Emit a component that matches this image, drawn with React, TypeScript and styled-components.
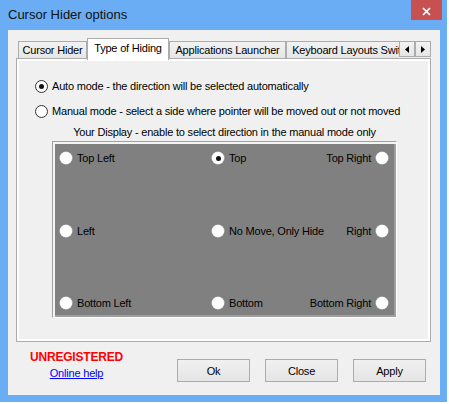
import React from "react";
import styled, { createGlobalStyle, css } from "styled-components";

const GlobalStyle = createGlobalStyle`
  html, body { margin: 0; padding: 0; background: #ffffff; }
  body {
    font-family: "Liberation Sans", Arial, sans-serif;
    font-size: 11px;
    letter-spacing: -0.2px;
    color: #000;
  }
  * { box-sizing: border-box; }
`;

const Window = styled.div`
  width: 447px;
  height: 402px;
  background: #6aadf4;
  display: flex;
  flex-direction: column;
`;

const TitleBar = styled.div`
  height: 30px;
  flex-shrink: 0;
  display: flex;
  align-items: flex-start;
  justify-content: space-between;
`;

const Title = styled.div`
  font-family: "Liberation Sans", Arial, sans-serif;
  font-size: 13px;
  letter-spacing: 0;
  line-height: 30px;
  padding-left: 8px;
  color: #111;
`;

const CloseButton = styled.div`
  width: 31px;
  height: 20px;
  margin-right: 5px;
  background: #c75050;
  display: flex;
  align-items: center;
  justify-content: center;
  padding-top: 2px;
`;

const Client = styled.div`
  flex: 1;
  margin: 0 7px 7px 8px;
  background: #f0f0f0;
  display: flex;
  flex-direction: column;
`;

const TabStrip = styled.div`
  height: 22px;
  margin: 8px 9px -2px 8px;
  padding-left: 2px;
  display: flex;
  position: relative;
  z-index: 1;
`;

const TabsViewport = styled.div`
  flex: 1;
  display: flex;
  align-items: flex-start;
  overflow: hidden;
  height: 22px;
`;

const Tab = styled.div<{ $active?: boolean; $w: number }>`
  flex: 0 0 auto;
  width: ${(p) => p.$w}px;
  white-space: nowrap;
  overflow: hidden;
  text-align: center;
  line-height: 13px;
  border: 1px solid #acacac;
  border-bottom: none;
  ${(p) =>
    p.$active
      ? css`
          height: 22px;
          padding-top: 3px;
          background: #ffffff;
          position: relative;
          z-index: 1;
        `
      : css`
          height: 17px;
          margin-top: 3px;
          padding-top: 2px;
          background: linear-gradient(#f2f2f2, #e6e6e6);
        `}
`;

const ArrowGroup = styled.div`
  display: flex;
  margin-top: 3px;
`;

const ArrowButton = styled.div`
  width: 16px;
  height: 16px;
  border: 1px solid #acacac;
  background: linear-gradient(#f2f2f2, #e6e6e6);
  display: flex;
  align-items: center;
  justify-content: center;
`;

const Panel = styled.div`
  height: 284px;
  margin: 0 9px 0 8px;
  border: 1px solid #acacac;
  box-shadow: inset 0 0 0 2px #ffffff;
  padding: 20px 0 0 18px;
  display: flex;
  flex-direction: column;
`;

const RadioRow = styled.label<{ $gapTop?: number }>`
  display: flex;
  align-items: center;
  gap: 4px;
  height: 14px;
  white-space: nowrap;
  margin-top: ${(p) => p.$gapTop ?? 0}px;
`;

const Radio = styled.span<{ $checked?: boolean }>`
  width: 13px;
  height: 13px;
  border-radius: 50%;
  border: 1px solid #333333;
  background: #ffffff;
  display: flex;
  align-items: center;
  justify-content: center;
  flex-shrink: 0;
  &::after {
    content: "";
    width: 5px;
    height: 5px;
    border-radius: 50%;
    background: ${(p) => (p.$checked ? "#111" : "transparent")};
  }
`;

const DisplaySection = styled.div`
  width: 345px;
  margin: 7px 0 0 17px;
  display: flex;
  flex-direction: column;
`;

const Caption = styled.div`
  height: 14px;
  line-height: 14px;
  text-align: center;
  white-space: nowrap;
`;

const DisplayBox = styled.div`
  height: 177px;
  margin-top: 2px;
  border: 1px solid;
  border-color: #a0a0a0 #ffffff #ffffff #a0a0a0;
  box-shadow: inset 2px 2px 0 #f4f4f4, inset -2px -2px 0 #a0a0a0;
  background: #808080;
  padding: 9px 8px 7px 7px;
  display: grid;
  grid-template-columns: 152px minmax(0, 1fr) auto;
  grid-template-rows: repeat(3, 14px);
  align-content: space-between;
`;

const Spot = styled.label<{ $end?: boolean }>`
  display: flex;
  align-items: center;
  gap: 5px;
  height: 14px;
  white-space: nowrap;
  justify-self: ${(p) => (p.$end ? "end" : "start")};
`;

const SpotRadio = styled.span<{ $checked?: boolean }>`
  width: 12px;
  height: 12px;
  border-radius: 50%;
  background: #ffffff;
  box-shadow: 0 0 0 0.5px #d8d8d8;
  display: flex;
  align-items: center;
  justify-content: center;
  flex-shrink: 0;
  &::after {
    content: "";
    width: 5px;
    height: 5px;
    border-radius: 50%;
    background: ${(p) => (p.$checked ? "#111" : "transparent")};
  }
`;

const BottomBar = styled.div`
  display: flex;
  align-items: flex-start;
  margin-top: 8px;
  padding: 0 14px 0 12px;
`;

const Status = styled.div`
  width: 113px;
  display: flex;
  flex-direction: column;
  align-items: center;
`;

const Unregistered = styled.div`
  font-size: 12px;
  font-weight: bold;
  line-height: 14px;
  color: #ff0000;
  letter-spacing: -0.2px;
`;

const HelpLink = styled.a`
  margin-top: 2px;
  line-height: 14px;
  color: #0000ff;
  text-decoration: underline;
  cursor: pointer;
`;

const ButtonGroup = styled.div`
  margin-left: auto;
  margin-top: 9px;
  display: flex;
  gap: 15px;
`;

const Button = styled.button`
  width: 73px;
  height: 23px;
  border: 1px solid #acacac;
  background: linear-gradient(#f0f0f0, #e5e5e5);
  font-family: inherit;
  font-size: 11px;
  letter-spacing: -0.2px;
  color: #000;
  padding: 0;
`;

type SpotDef = { label: string; end?: boolean; checked?: boolean };

const spots: SpotDef[] = [
  { label: "Top Left" },
  { label: "Top", checked: true },
  { label: "Top Right", end: true },
  { label: "Left" },
  { label: "No Move, Only Hide" },
  { label: "Right", end: true },
  { label: "Bottom Left" },
  { label: "Bottom" },
  { label: "Bottom Right", end: true },
];

const tabs = [
  { label: "Cursor Hider", w: 69 },
  { label: "Type of Hiding", w: 82, active: true },
  { label: "Applications Launcher", w: 117 },
  { label: "Keyboard Layouts Switch", w: 132 },
];

export default function App() {
  return (
    <>
      <GlobalStyle />
      <Window>
        <TitleBar>
          <Title>Cursor Hider options</Title>
          <CloseButton>
            <svg width="9" height="9" viewBox="0 0 9 9">
              <path d="M1 1 L8 8 M8 1 L1 8" stroke="#fff" strokeWidth="1.7" />
            </svg>
          </CloseButton>
        </TitleBar>
        <Client>
          <TabStrip>
            <TabsViewport>
              {tabs.map((t) => (
                <Tab key={t.label} $w={t.w} $active={t.active}>
                  {t.label}
                </Tab>
              ))}
            </TabsViewport>
            <ArrowGroup>
              <ArrowButton>
                <svg width="4" height="7" viewBox="0 0 4 7">
                  <path d="M4 0 L0 3.5 L4 7 Z" fill="#000" />
                </svg>
              </ArrowButton>
              <ArrowButton>
                <svg width="4" height="7" viewBox="0 0 4 7">
                  <path d="M0 0 L4 3.5 L0 7 Z" fill="#000" />
                </svg>
              </ArrowButton>
            </ArrowGroup>
          </TabStrip>
          <Panel>
            <RadioRow>
              <Radio $checked />
              <span>Auto mode - the direction will be selected automatically</span>
            </RadioRow>
            <RadioRow $gapTop={11}>
              <Radio />
              <span>Manual mode - select a side where pointer will be moved out or not moved</span>
            </RadioRow>
            <DisplaySection>
              <Caption>Your Display - enable to select direction in the manual mode only</Caption>
              <DisplayBox>
                {spots.map((s) =>
                  s.end ? (
                    <Spot key={s.label} $end>
                      <span>{s.label}</span>
                      <SpotRadio $checked={s.checked} />
                    </Spot>
                  ) : (
                    <Spot key={s.label}>
                      <SpotRadio $checked={s.checked} />
                      <span>{s.label}</span>
                    </Spot>
                  )
                )}
              </DisplayBox>
            </DisplaySection>
          </Panel>
          <BottomBar>
            <Status>
              <Unregistered>UNREGISTERED</Unregistered>
              <HelpLink>Online help</HelpLink>
            </Status>
            <ButtonGroup>
              <Button>Ok</Button>
              <Button>Close</Button>
              <Button>Apply</Button>
            </ButtonGroup>
          </BottomBar>
        </Client>
      </Window>
    </>
  );
}
